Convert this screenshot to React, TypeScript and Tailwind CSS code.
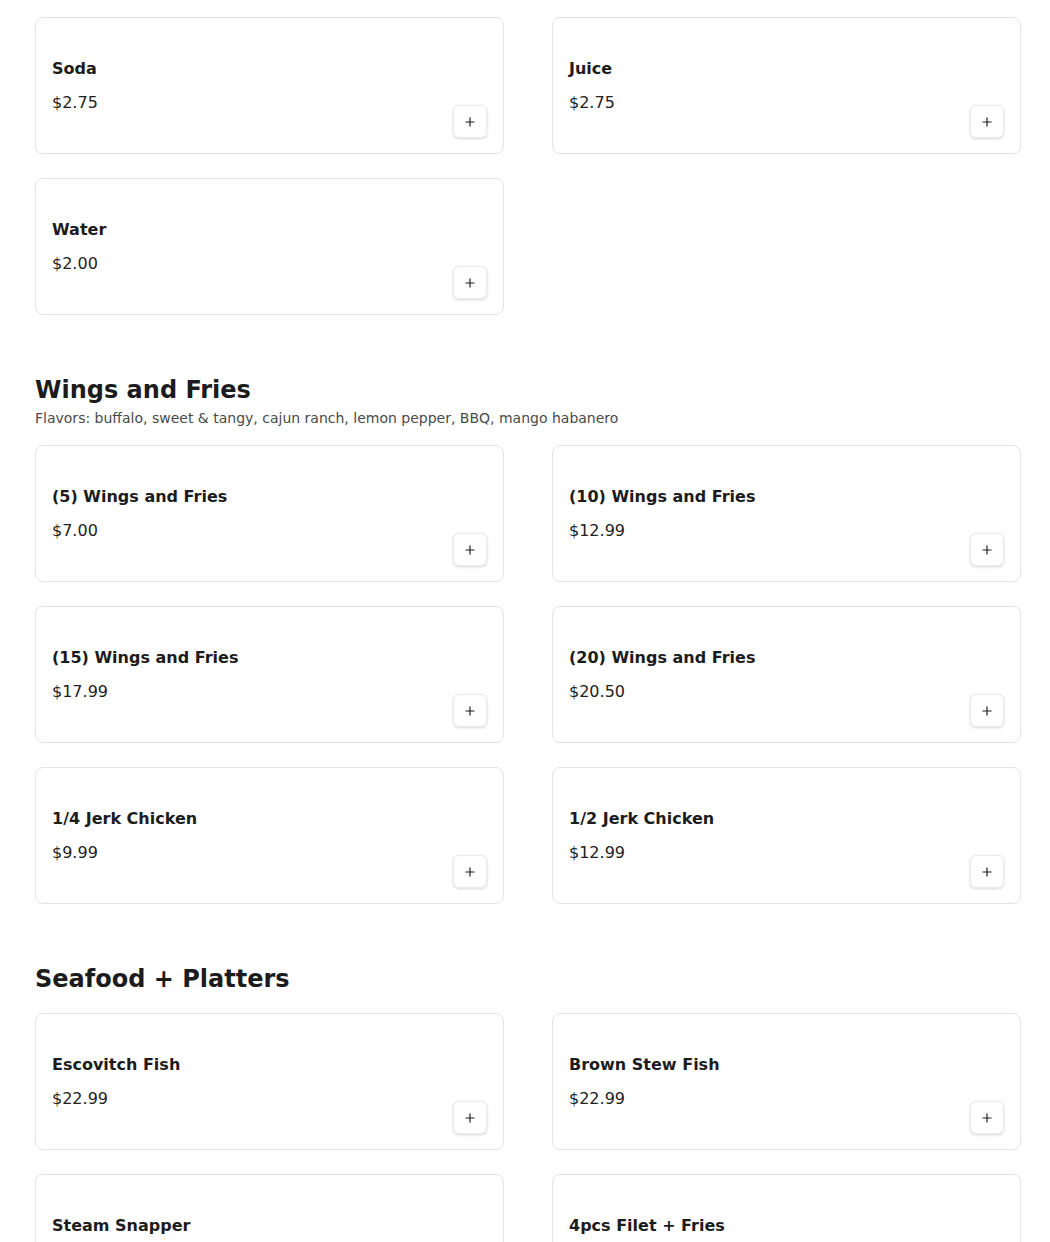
import React from "react";
import { Plus } from "lucide-react";

type Item = { name: string; price: string };

const sections: { title?: string; desc?: string; items: Item[] }[] = [
  {
    items: [
      { name: "Soda", price: "$2.75" },
      { name: "Juice", price: "$2.75" },
      { name: "Water", price: "$2.00" },
    ],
  },
  {
    title: "Wings and Fries",
    desc: "Flavors: buffalo, sweet & tangy, cajun ranch, lemon pepper, BBQ, mango habanero",
    items: [
      { name: "(5) Wings and Fries", price: "$7.00" },
      { name: "(10) Wings and Fries", price: "$12.99" },
      { name: "(15) Wings and Fries", price: "$17.99" },
      { name: "(20) Wings and Fries", price: "$20.50" },
      { name: "1/4 Jerk Chicken", price: "$9.99" },
      { name: "1/2 Jerk Chicken", price: "$12.99" },
    ],
  },
  {
    title: "Seafood + Platters",
    items: [
      { name: "Escovitch Fish", price: "$22.99" },
      { name: "Brown Stew Fish", price: "$22.99" },
      { name: "Steam Snapper", price: "$22.99" },
      { name: "4pcs Filet + Fries", price: "$14.99" },
    ],
  },
];

function Card({ item }: { item: Item }) {
  return (
    <div className="flex h-[137px] justify-between rounded-lg border border-[#e4e4e4] bg-white p-4">
      <div className="flex flex-col self-center pb-[2px] pt-[3px]">
        <div className="text-[16px] font-bold leading-6 text-[#1c1c1c]">{item.name}</div>
        <div className="mt-[10px] text-[16px] leading-6 text-[#222]">{item.price}</div>
      </div>
      <button className="mb-[-1px] flex h-[33px] w-[34px] items-center justify-center self-end rounded-md border border-[#ebebeb] bg-white shadow-[0_1px_3px_rgba(0,0,0,0.16)]">
        <Plus size={14} strokeWidth={2} color="#1c1c1c" />
      </button>
    </div>
  );
}

export default function App() {
  return (
    <div
      className="min-h-[1242px] bg-white pl-[35px] pt-[17px]"
      style={{ fontFamily: '"DejaVu Sans", sans-serif' }}
    >
      <div className="w-[986px]">
        {sections.map((s, i) => (
          <section key={i} className={i === 0 ? "" : "mt-[57px]"}>
            {s.title && (
              <h2 className="text-[24px] font-bold leading-[36px] text-[#1c1c1c]">{s.title}</h2>
            )}
            {s.desc && (
              <p className="text-[14px] leading-[21px] text-[#4a4a4a]">{s.desc}</p>
            )}
            <div className={`grid grid-cols-2 gap-x-[48px] gap-y-6 ${s.title ? "mt-4" : ""}`}>
              {s.items.map((it) => (
                <Card key={it.name} item={it} />
              ))}
            </div>
          </section>
        ))}
      </div>
    </div>
  );
}
